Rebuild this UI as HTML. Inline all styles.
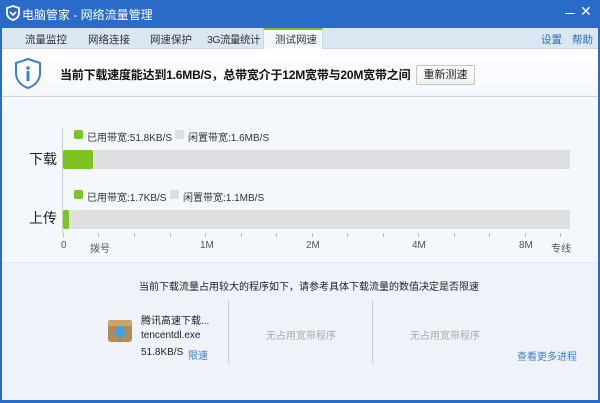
<!DOCTYPE html>
<html><head><meta charset="utf-8"><style>
*{margin:0;padding:0;box-sizing:border-box}
body{width:600px;height:403px;overflow:hidden;font-family:"Liberation Sans","Noto Sans CJK SC",sans-serif;font-size:11px;color:#222;position:relative;background:#2a6bc9}
.abs{position:absolute}
#win{position:absolute;left:2px;top:28px;width:596px;height:372px;background:#f3f8fd}
.tabs{position:absolute;left:0;top:0;width:596px;height:21px;background:#dae6f2;border-bottom:1px solid #c9d8e8}
.tab{position:absolute;top:4px;font-size:10.5px;color:#333}
.info{position:absolute;left:0;top:21px;width:596px;height:48px;background:linear-gradient(#fff,#f4f8fc);border-bottom:1px solid #c8d8e8}
.gray{background:#dfdfdf}
.green{background:#7cc520;border-radius:2px}
.lbl{position:absolute;font-size:10px;color:#333}
.ax{position:absolute;font-size:10px;color:#555}
.tick{position:absolute;top:233px;width:1px;height:4px;background:#bbb}
</style></head><body>
<svg class="abs" style="left:6px;top:5px" width="14" height="16" viewBox="0 0 14 16"><path d="M7 1 L13 3 V8 C13 12 10 14 7 15 C4 14 1 12 1 8 V3 Z" fill="none" stroke="#fff" stroke-width="1.8"/><path d="M4 7 L7 10 L10 7" fill="none" stroke="#fff" stroke-width="1.6"/></svg>
<div class="abs" style="left:22px;top:6px;color:#fff;font-size:12px">电脑管家 - 网络流量管理</div>
<div class="abs" style="left:565px;top:13px;width:10px;height:1px;background:#fff"></div>
<div class="abs" style="left:580px;top:3px;color:#fff;font-size:14px">✕</div>
<div id="win">
<div class="tabs">
<div class="tab" style="left:23px">流量监控</div>
<div class="tab" style="left:86px">网络连接</div>
<div class="tab" style="left:148px">网速保护</div>
<div class="tab" style="left:205px;letter-spacing:-0.5px">3G流量统计</div>
<div style="position:absolute;left:261px;top:0;width:60px;height:22px;background:#f6f9fc;border-top:2px solid #7cc520;border-left:1px solid #c9d8e8;border-right:1px solid #c9d8e8"></div>
<div class="tab" style="left:273px">测试网速</div>
<div class="tab" style="left:539px;color:#2a6bc9">设置</div>
<div class="tab" style="left:570px;color:#2a6bc9">帮助</div>
</div>
<div class="info">
<svg class="abs" style="left:11px;top:8px" width="30" height="33" viewBox="0 0 30 33"><path d="M15 2 L27 6 V16 C27 24 21 29 15 31 C9 29 3 24 3 16 V6 Z" fill="#fff" stroke="#3b7fd0" stroke-width="2"/><circle cx="15" cy="11" r="1.8" fill="#3b7fd0"/><rect x="13.5" y="14" width="3" height="10" fill="#3b7fd0"/></svg>
<div class="abs" style="left:58px;top:17px;font-size:12px;font-weight:bold;color:#111;white-space:nowrap;letter-spacing:-0.2px">当前下载速度能达到1.6MB/S，总带宽介于12M宽带与20M宽带之间</div>
<div class="abs" style="left:414px;top:16px;width:59px;height:20px;border:1px solid #c6c6c6;border-radius:2px;background:linear-gradient(#fff,#f0f0f0);text-align:center;line-height:18px;font-size:11px">重新测速</div>
</div>
</div>
<div class="abs" style="left:62px;top:128px;width:1px;height:105px;background:#ccc"></div>
<div class="abs green" style="left:74px;top:130px;width:9px;height:9px"></div>
<div class="lbl" style="left:87px;top:129px">已用带宽:51.8KB/S</div>
<div class="abs gray" style="left:175px;top:130px;width:9px;height:9px"></div>
<div class="lbl" style="left:188px;top:129px">闲置带宽:1.6MB/S</div>
<div class="abs" style="left:29px;top:149px;font-size:14px">下载</div>
<div class="abs gray" style="left:63px;top:150px;width:507px;height:19px"></div>
<div class="abs green" style="left:63px;top:150px;width:30px;height:19px"></div>
<div class="abs green" style="left:74px;top:190px;width:9px;height:9px"></div>
<div class="lbl" style="left:87px;top:189px">已用带宽:1.7KB/S</div>
<div class="abs gray" style="left:170px;top:190px;width:9px;height:9px"></div>
<div class="lbl" style="left:183px;top:189px">闲置带宽:1.1MB/S</div>
<div class="abs" style="left:29px;top:208px;font-size:14px">上传</div>
<div class="abs gray" style="left:63px;top:210px;width:507px;height:19px"></div>
<div class="abs green" style="left:63px;top:210px;width:6px;height:19px"></div>
<div class="tick" style="left:63px"></div><div class="tick" style="left:98px"></div><div class="tick" style="left:134px"></div><div class="tick" style="left:170px"></div><div class="tick" style="left:205px"></div><div class="tick" style="left:241px"></div><div class="tick" style="left:276px"></div><div class="tick" style="left:312px"></div><div class="tick" style="left:347px"></div><div class="tick" style="left:383px"></div><div class="tick" style="left:418px"></div><div class="tick" style="left:454px"></div><div class="tick" style="left:489px"></div><div class="tick" style="left:525px"></div><div class="tick" style="left:560px"></div>
<div class="ax" style="left:61px;top:240px">0</div>
<div class="ax" style="left:90px;top:240px">拨号</div>
<div class="ax" style="left:200px;top:240px">1M</div>
<div class="ax" style="left:306px;top:240px">2M</div>
<div class="ax" style="left:412px;top:240px">4M</div>
<div class="ax" style="left:519px;top:240px">8M</div>
<div class="ax" style="left:551px;top:240px">专线</div>
<div class="abs" style="left:2px;top:262px;width:596px;height:138px;background:#eef3fa;border-top:1px solid #e2e9f1"></div>
<div class="abs" style="left:139px;top:278px;font-size:10px">当前下载流量占用较大的程序如下，请参考具体下载流量的数值决定是否限速</div>
<svg class="abs" style="left:107px;top:317px" width="27" height="27" viewBox="0 0 27 27"><rect x="1" y="3" width="24" height="22" rx="3" fill="#b08a58"/><rect x="1" y="3" width="24" height="6" rx="2" fill="#c9a46f"/><path d="M10 9 H16 V15 H20 L13 22 L6 15 H10 Z" fill="#3aa2e8"/></svg>
<div class="abs" style="left:141px;top:312px;font-size:10px">腾讯高速下载...</div>
<div class="abs" style="left:141px;top:330px;font-size:10px">tencentdl.exe</div>
<div class="abs" style="left:141px;top:347px;font-size:10px">51.8KB/S</div>
<div class="abs" style="left:188px;top:347px;font-size:10px;color:#3b7fd0">限速</div>
<div class="abs" style="left:228px;top:300px;width:1px;height:63px;background:#ccc"></div>
<div class="abs" style="left:372px;top:300px;width:1px;height:63px;background:#ccc"></div>
<div class="abs" style="left:266px;top:327px;font-size:10px;color:#aaa">无占用宽带程序</div>
<div class="abs" style="left:410px;top:327px;font-size:10px;color:#aaa">无占用宽带程序</div>
<div class="abs" style="left:517px;top:348px;font-size:10px;color:#3b7fd0">查看更多进程</div>
</body></html>
